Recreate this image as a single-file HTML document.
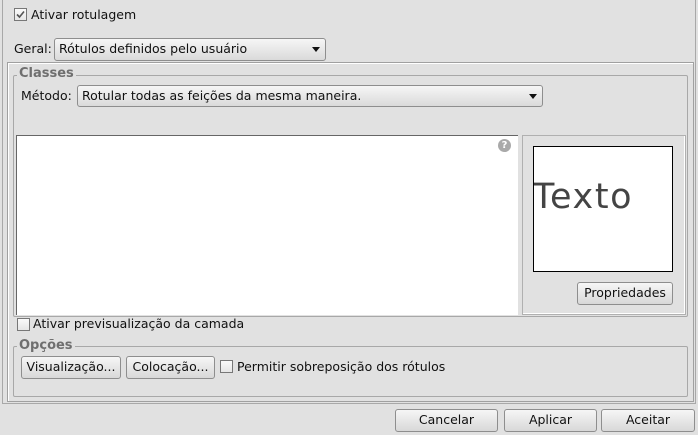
<!DOCTYPE html>
<html><head><meta charset="utf-8"><style>
*{box-sizing:border-box;margin:0;padding:0}
body{width:698px;height:435px;background:#e1e1e1;position:relative;overflow:hidden;font-family:"DejaVu Sans","Liberation Sans",sans-serif;font-size:12.5px;color:#111}
.a{position:absolute}
.t{position:absolute;white-space:nowrap;line-height:14px}
.cb{position:absolute;width:13px;height:13px;border:1px solid #777;background:linear-gradient(#fafafa,#e6e6e6)}
.btn{position:absolute;border:1px solid #8e8e8e;border-radius:3px;background:linear-gradient(#f6f6f6,#d8d8d8);text-align:center;line-height:20px;white-space:nowrap}
.combo{position:absolute;border:1px solid #8e8e8e;border-radius:3px;background:linear-gradient(#f6f6f6,#dadada);line-height:20px;padding-left:4px;white-space:nowrap}
.arr{position:absolute;right:5px;top:8px;width:0;height:0;border-left:4px solid transparent;border-right:4px solid transparent;border-top:5px solid #111}
.leg{position:absolute;font-weight:bold;color:#6f6f6f;background:#e1e1e1;padding:0 2px;line-height:14px;font-size:13px}
</style></head><body>
<div class="a" style="left:2px;top:-2px;width:694px;height:406px;border:1px solid #a8a8a8;border-top:none"></div>
<div class="a" style="left:7px;top:62px;width:687px;height:340px;border:1px solid #a0a0a0;box-shadow:inset 1px 1px 0 #fff"></div>
<div class="cb" style="left:14px;top:8px"><svg width="11" height="11" style="position:absolute;left:0;top:0"><path d="M2 5.5 L4.5 8 L9 2.5" stroke="#555" stroke-width="1.6" fill="none"/></svg></div>
<div class="t" style="left:31px;top:8px">Ativar rotulagem</div>
<div class="t" style="left:14px;top:42px">Geral:</div>
<div class="combo" style="left:54px;top:38px;width:272px;height:23px">Rótulos definidos pelo usuário<div class="arr"></div></div>
<div class="a" style="left:13px;top:75px;width:675px;height:242px;border:1px solid #a8a8a8;border-radius:2px"></div>
<div class="leg" style="left:17px;top:67px">Classes</div>
<div class="t" style="left:21px;top:89px">Método:</div>
<div class="combo" style="left:77px;top:85px;width:466px;height:22px">Rotular todas as feições da mesma maneira.<div class="arr"></div></div>
<div class="a" style="left:16px;top:135px;width:502px;height:180px;background:#fff;border-top:1px solid #666;border-left:1px solid #666"></div>
<div class="a" style="left:498px;top:139px;width:13px;height:13px;border-radius:50%;background:#a9a9a9;color:#fff;font-size:10px;font-weight:bold;text-align:center;line-height:13px">?</div>
<div class="a" style="left:522px;top:135px;width:164px;height:180px;border:1px solid #b0b0b0;box-shadow:inset -1px -1px 0 #fff"></div>
<div class="a" style="left:533px;top:146px;width:140px;height:126px;background:#fff;border:1px solid #000;overflow:hidden"><div class="t" style="left:-1px;top:30px;font-size:35px;line-height:40px;color:#444;letter-spacing:1.6px;font-family:'DejaVu Sans',sans-serif">Texto</div></div>
<div class="btn" style="left:577px;top:282px;width:96px;height:23px">Propriedades</div>
<div class="cb" style="left:17px;top:318px"></div>
<div class="t" style="left:33px;top:317px">Ativar previsualização da camada</div>
<div class="a" style="left:13px;top:346px;width:675px;height:51px;border:1px solid #a8a8a8;border-radius:2px"></div>
<div class="leg" style="left:17px;top:339px">Opções</div>
<div class="btn" style="left:21px;top:356px;width:100px;height:23px">Visualização...</div>
<div class="btn" style="left:126px;top:356px;width:89px;height:23px">Colocação...</div>
<div class="cb" style="left:220px;top:360px"></div>
<div class="t" style="left:237px;top:360px">Permitir sobreposição dos rótulos</div>
<div class="btn" style="left:395px;top:409px;width:103px;height:23px">Cancelar</div>
<div class="btn" style="left:504px;top:409px;width:93px;height:23px">Aplicar</div>
<div class="btn" style="left:601px;top:409px;width:94px;height:23px">Aceitar</div>
</body></html>
